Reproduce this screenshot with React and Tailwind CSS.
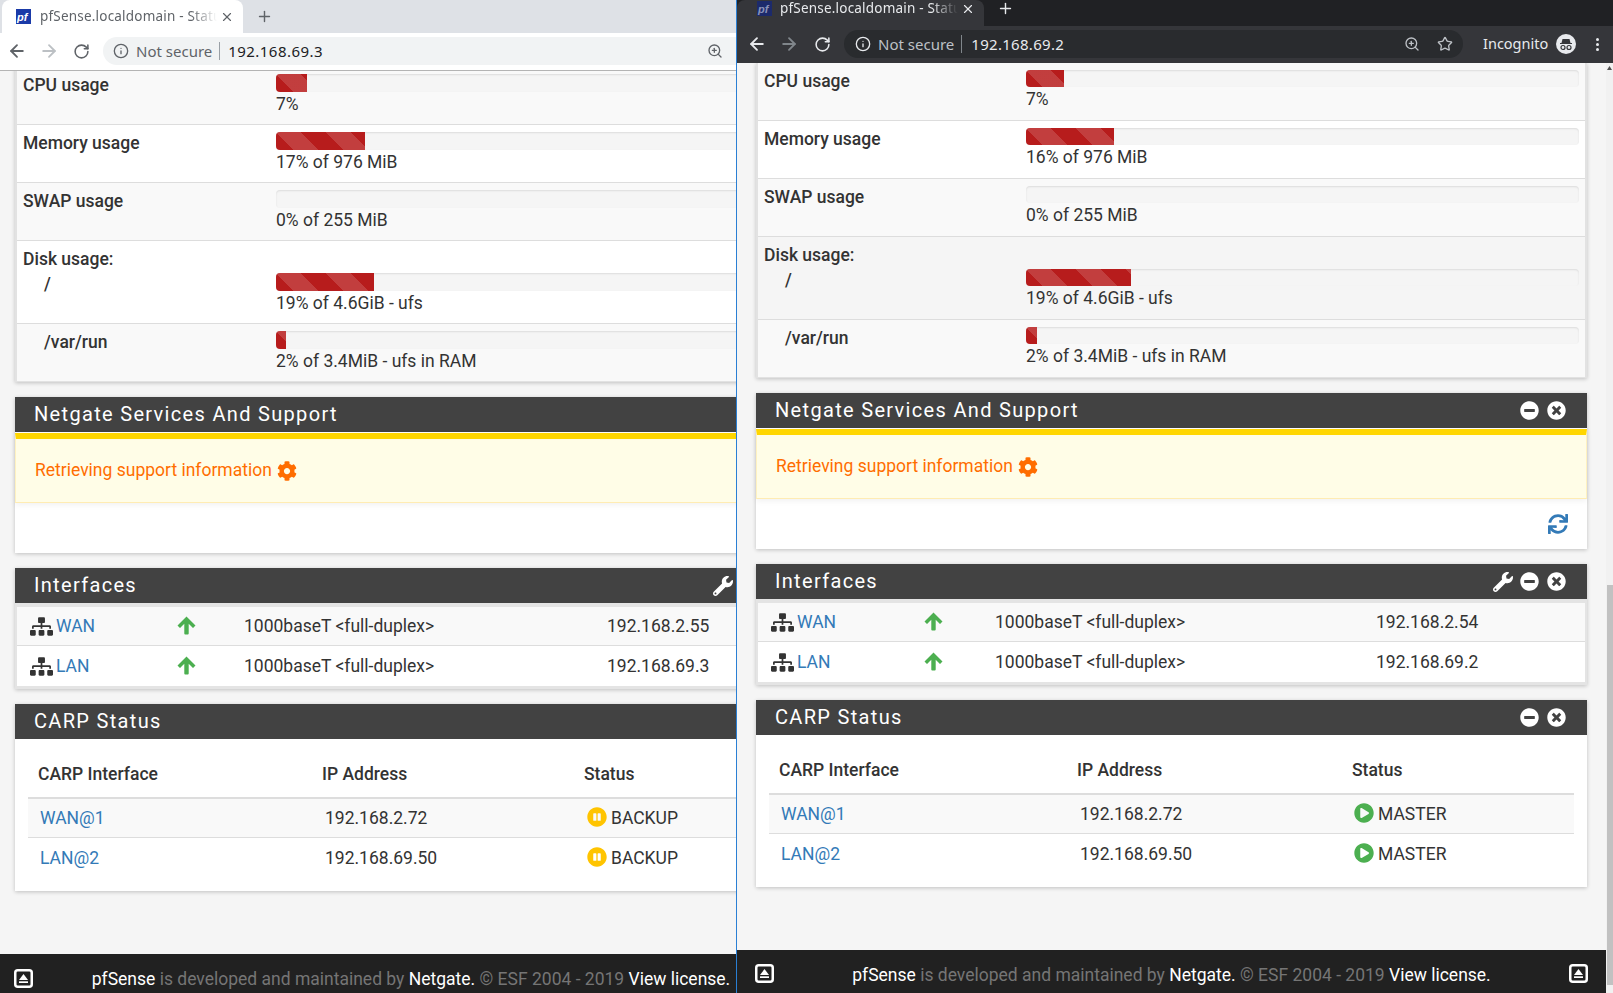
import React from "react";
import { ArrowLeft, ArrowRight, RotateCw, Info, ZoomIn, Star, X, Plus } from "lucide-react";
import { FaCog, FaMinusCircle, FaTimesCircle, FaWrench, FaSitemap, FaPauseCircle, FaPlayCircle, FaSync } from "react-icons/fa";

const stripes =
  "bg-[#b71c1c] bg-[linear-gradient(45deg,rgba(255,255,255,.15)_25%,transparent_25%,transparent_50%,rgba(255,255,255,.15)_50%,rgba(255,255,255,.15)_75%,transparent_75%,transparent)] bg-[length:50px_50px]";

function Favicon({ dark }) {
  return (
    <svg width="15" height="15" viewBox="0 0 15 15" className="shrink-0">
      <rect width="15" height="15" fill={dark ? "#1c2a6b" : "#1a3aa8"} />
      <text x="1" y="12" fontSize="11" fontWeight="700" fontStyle="italic" fontFamily="Liberation Sans, sans-serif" fill={dark ? "#8a93b8" : "#ffffff"}>pf</text>
    </svg>
  );
}

function Incognito() {
  return (
    <svg width="20" height="20" viewBox="0 0 20 20" className="shrink-0">
      <circle cx="10" cy="10" r="10" fill="#e8eaed" />
      <path d="M4 9h12v1H4zM6.5 5h7l1 4h-9z" fill="#35363a" />
      <circle cx="7" cy="13.5" r="2" fill="none" stroke="#35363a" strokeWidth="1.2" />
      <circle cx="13" cy="13.5" r="2" fill="none" stroke="#35363a" strokeWidth="1.2" />
    </svg>
  );
}

function UpBox() {
  return (
    <svg width="19" height="19" viewBox="0 0 19 19" className="mb-[3px] shrink-0">
      <rect x="1.25" y="1.25" width="16.5" height="16.5" rx="2.5" fill="none" stroke="#ffffff" strokeWidth="2.5" />
      <path d="M9.5 5l4.5 6h-9z" fill="#ffffff" />
      <rect x="5" y="12.3" width="9" height="1.7" fill="#ffffff" />
    </svg>
  );
}

function UpArrow() {
  return (
    <svg width="19" height="19" viewBox="0 0 19 19" className="mb-[2px] text-[#4caf50]">
      <path d="M9.5 .5L18.5 9.5 16 12 11.7 7.8V17.6q0 .9-.9 .9H8.2q-.9 0-.9-.9V7.8L3 12 .5 9.5z" fill="currentColor" />
    </svg>
  );
}

function LightChrome() {
  return (
    <div className="shrink-0 font-['Noto_Sans',sans-serif]">
      <div className="flex h-[33px] items-center bg-[#dee1e6]">
        <div className="ml-[2px] flex h-[33px] w-[241px] items-center rounded-t-lg bg-white pl-[14px]">
          <Favicon />
          <span className="ml-[9px] w-[177px] overflow-hidden whitespace-nowrap text-[13.5px] tracking-[0.2px] text-[#5f6368] [mask-image:linear-gradient(90deg,#000_85%,transparent)]">pfSense.localdomain - Status: Dashboard</span>
          <X size={14} className="ml-[3px] text-[#5f6368]" />
        </div>
        <Plus size={17} className="ml-[13px] text-[#5f6368]" />
      </div>
      <div className="flex h-[38px] items-center border-b border-[#b4b4b4] bg-white pb-px pl-[7px]">
        <ArrowLeft size={20} strokeWidth={2.2} className="text-[#5f6368]" />
        <ArrowRight size={20} strokeWidth={2.2} className="ml-[12px] text-[#bcc0c4]" />
        <RotateCw size={17} strokeWidth={2.2} className="ml-[14px] text-[#5f6368]" />
        <div className="ml-[13px] flex h-[28px] flex-1 items-center rounded-l-full bg-[#f1f3f4] pl-[10px] pr-[13px] text-[15px]">
          <Info size={16} className="text-[#5f6368]" />
          <span className="ml-[7px] text-[#5f6368]">Not secure</span>
          <span className="ml-[7px] h-[18px] w-px bg-[#9aa0a6]" />
          <span className="ml-[8px] tracking-[0.45px] text-[#202124]">192.168.69.3</span>
          <ZoomIn size={16} className="ml-auto text-[#5f6368]" />
        </div>
      </div>
    </div>
  );
}

function DarkChrome() {
  return (
    <div className="shrink-0 font-['Noto_Sans',sans-serif]">
      <div className="flex h-[26px] items-center bg-[#202124]">
        <div className="flex h-[26px] w-[247px] items-start overflow-hidden rounded-t-lg bg-[#35363a] pl-[20px] pt-px">
          <Favicon dark />
          <span className="ml-[8px] w-[178px] overflow-hidden whitespace-nowrap text-[13.5px] leading-[15px] tracking-[0.2px] text-[#e8eaed] [mask-image:linear-gradient(90deg,#000_85%,transparent)]">pfSense.localdomain - Status: Dashboard</span>
          <X size={14} className="ml-[3px] mt-px text-[#e8eaed]" />
        </div>
        <Plus size={17} className="mb-[10px] ml-[13px] text-[#e8eaed]" />
      </div>
      <div className="flex h-[37px] items-center bg-[#35363a] pb-px pl-[10px] pr-[9px]">
        <ArrowLeft size={20} strokeWidth={2.2} className="text-[#e8eaed]" />
        <ArrowRight size={20} strokeWidth={2.2} className="ml-[12px] text-[#80868b]" />
        <RotateCw size={17} strokeWidth={2.2} className="ml-[15px] text-[#e8eaed]" />
        <div className="ml-[13px] flex h-[28px] w-[619px] items-center rounded-full bg-[#292b2e] pl-[11px] pr-[10px] text-[15px]">
          <Info size={16} className="text-[#e8eaed]" />
          <span className="ml-[7px] text-[#bdc1c6]">Not secure</span>
          <span className="ml-[7px] h-[18px] w-px bg-[#80868b]" />
          <span className="ml-[9px] tracking-[0.3px] text-[#e8eaed]">192.168.69.2</span>
          <ZoomIn size={16} className="ml-auto text-[#bdc1c6]" />
          <Star size={16} className="ml-[17px] text-[#bdc1c6]" />
        </div>
        <span className="ml-[20px] text-[14.5px] text-[#e8eaed]">Incognito</span>
        <span className="ml-[8px]"><Incognito /></span>
        <span className="ml-[20px] flex flex-col gap-[2px]">
          <i className="size-[3px] rounded-full bg-[#e8eaed]" />
          <i className="size-[3px] rounded-full bg-[#e8eaed]" />
          <i className="size-[3px] rounded-full bg-[#e8eaed]" />
        </span>
      </div>
    </div>
  );
}

function Panel({ title, wrench, children }) {
  return (
    <section className="bg-white shadow-[0_1px_4px_rgba(0,0,0,.22)]">
      <div className="flex h-[35px] items-center justify-between bg-[#424242] pl-[19px] pr-[21px] text-[20px] tracking-[1.32px] text-white">
        <h2 className="font-normal leading-[35px]">{title}</h2>
        <div className="flex items-center gap-[8px]">
          {wrench && <FaWrench size={20} className="-mr-px" />}
          <FaMinusCircle size={19} />
          <FaTimesCircle size={19} />
        </div>
      </div>
      {children}
    </section>
  );
}

function Bar({ w, h }) {
  return (
    <div className={`${h} overflow-hidden rounded-[4px] bg-[#f5f5f5] shadow-[inset_0_1px_2px_rgba(0,0,0,.1)]`}>
      {w > 0 && <div className={`h-full ${stripes}`} style={{ width: w }} />}
    </div>
  );
}

function MetricRow({ label, indent, head, value, w, bg, d, last }) {
  return (
    <div className={`flex px-[6px] py-[7px] leading-[25px] ${last ? "" : "border-b border-[#dddddd]"} ${bg}`}>
      <div className={`-mt-px shrink-0 font-medium ${d.metricCol}`}>
        {head && <div>{head}</div>}
        <div className={indent ? "pl-[21px]" : ""}>{label}</div>
      </div>
      <div className={`min-w-0 flex-1 ${head ? "pt-[25px]" : ""}`}>
        <Bar w={w} h={d.barH} />
        <div className={d.valuePad}>{value}</div>
      </div>
    </div>
  );
}

function Page({ d }) {
  return (
    <div className={`${d.pageW} shrink-0 font-['Roboto',sans-serif] text-[17.5px] text-[#333333]`}>
      <div className={`${d.mx} flex flex-col gap-[15px]`}>
        <section className={`border-x-2 border-b border-[#e2e2e2] bg-white shadow-[0_1px_4px_rgba(0,0,0,.22)] ${d.firstTop}`}>
          <MetricRow label="CPU usage" value="7%" w={d.bars[0]} bg="bg-[#f9f9f9]" d={d} />
          <MetricRow label="Memory usage" value={d.mem} w={d.bars[1]} bg="bg-white" d={d} />
          <MetricRow label="SWAP usage" value="0% of 255 MiB" w={0} bg="bg-[#f9f9f9]" d={d} />
          <MetricRow head="Disk usage:" label="/" indent value="19% of 4.6GiB - ufs" w={d.bars[2]} d={d} bg={d.diskBg} />
          <MetricRow label="/var/run" indent value="2% of 3.4MiB - ufs in RAM" w={d.bars[3]} d={d} bg="bg-[#f9f9f9]" last />
        </section>

        <Panel title="Netgate Services And Support">
          <div className="mt-px h-[70px] border-x border-b border-x-[#fff2c0] border-b-[#ffecb3] border-t-[6px] border-t-[#ffd600] bg-[#fffde7] pl-[19px] shadow-[0_2px_6px_rgba(0,0,0,.06)]">
            <div className="flex h-[63px] items-center gap-[5px] text-[#ff6d00]">
              Retrieving support information <FaCog size={20} />
            </div>
          </div>
          <div className="flex h-[50px] items-center justify-end pr-[19px] text-[#337ab7]">
            <FaSync size={20} />
          </div>
        </Panel>

        <Panel title="Interfaces" wrench>
          <div className="border-x-[2.5px] border-b-[3px] border-t-4 border-[#e4e4e4]">
            {d.ifaces.map(([n, ip], i) => (
              <div key={n} className={`grid items-center pl-[13px] ${d.ifCols} ${i === 0 ? "h-[39px] border-b border-[#dddddd] bg-[#f9f9f9]" : "h-[40px] bg-white"}`}>
                <div className="flex items-center gap-[3px]">
                  <FaSitemap size={23} className="text-[#333333]" />
                  <a className="text-[#337ab7]">{n}</a>
                </div>
                <UpArrow />
                <div>1000baseT &lt;full-duplex&gt;</div>
                <div>{ip}</div>
              </div>
            ))}
          </div>
        </Panel>

        <Panel title="CARP Status">
          <div className="px-[13px] pb-[13px]">
            <div className={`grid h-[60px] items-center border-b-2 border-[#dddddd] pl-[10px] pt-[13px] font-medium ${d.carpHead}`}>
              <div>CARP Interface</div>
              <div>IP Address</div>
              <div>Status</div>
            </div>
            {d.carp.map(([n, ip], i) => (
              <div key={n} className={`grid items-center pl-[12px] ${d.carpRow} ${i === 0 ? "h-[39px] border-b border-[#dddddd] bg-[#f9f9f9]" : "h-[40px] bg-white"}`}>
                <a className="text-[#337ab7]">{n}</a>
                <div>{ip}</div>
                <div className="flex items-center gap-[4px]">
                  {d.dark ? <FaPlayCircle size={20} className="mb-[3px] text-[#4caf50]" /> : <FaPauseCircle size={20} className="mb-[3px] text-[#ffc400]" />}
                  {d.dark ? "MASTER" : "BACKUP"}
                </div>
              </div>
            ))}
          </div>
        </Panel>
      </div>
    </div>
  );
}

function Footer({ d }) {
  return (
    <div className={`${d.pageW} ${d.footer} flex shrink-0 items-center justify-between bg-[#212121] font-['Roboto',sans-serif] text-[17.5px] text-[#757575]`}>
      <UpBox />
      <p>
        <span className="text-white">pfSense</span> is developed and maintained by <span className="text-white">Netgate.</span> © ESF 2004 - 2019 <span className="text-white">View license.</span>
      </p>
      <UpBox />
    </div>
  );
}

const left = {
  dark: false,
  pageW: "w-[822px]",
  mx: "mx-[15px]",
  firstTop: "-mt-[4px]",
  metricCol: "w-[253px]",
  barH: "h-[18px]",
  valuePad: "",
  diskBg: "bg-white",
  footer: "h-[39px] pt-[12px] px-[14px]",
  mem: "17% of 976 MiB",
  bars: [31, 89, 98, 10],
  ifCols: "grid-cols-[147px_67px_363px_1fr]",
  carpHead: "grid-cols-[284px_262px_1fr]",
  carpRow: "grid-cols-[285px_262px_1fr]",
  ifaces: [["WAN", "192.168.2.55"], ["LAN", "192.168.69.3"]],
  carp: [["WAN@1", "192.168.2.72"], ["LAN@2", "192.168.69.50"]],
};

const right = {
  dark: true,
  pageW: "w-[869px]",
  mx: "mx-[19px]",
  firstTop: "",
  metricCol: "w-[262px]",
  barH: "h-[17px]",
  valuePad: "pb-px",
  diskBg: "bg-[#f5f5f5]",
  footer: "h-[43px] pt-[7px] px-[18px]",
  mem: "16% of 976 MiB",
  bars: [38, 88, 105, 11],
  ifCols: "grid-cols-[153px_71px_381px_1fr]",
  carpHead: "grid-cols-[298px_275px_1fr]",
  carpRow: "grid-cols-[299px_274px_1fr]",
  ifaces: [["WAN", "192.168.2.54"], ["LAN", "192.168.69.2"]],
  carp: [["WAN@1", "192.168.2.72"], ["LAN@2", "192.168.69.50"]],
};

export default function App() {
  return (
    <div className="flex h-[993px] w-[1613px] overflow-hidden bg-[#f5f5f5]">
      <div className="flex w-[735.5px] shrink-0 flex-col overflow-hidden">
        <LightChrome />
        <div className="min-h-0 flex-1 overflow-hidden">
          <Page d={left} />
        </div>
        <Footer d={left} />
      </div>
      <div className="w-[1.5px] shrink-0 bg-[#2a7fd4]" />
      <div className="flex min-w-0 flex-1 flex-col overflow-hidden">
        <DarkChrome />
        <div className="flex min-h-0 flex-1">
          <div className="flex w-[869px] shrink-0 flex-col">
            <div className="min-h-0 flex-1 overflow-hidden">
              <Page d={right} />
            </div>
            <Footer d={right} />
          </div>
          <div className="flex flex-1 flex-col items-end bg-[#f1f1f1]">
            <svg width="7" height="12" viewBox="0 0 7 12" className="text-[#505050]">
              <path d="M3.5 3L6 7H1z" fill="currentColor" />
            </svg>
            <div className="flex-1" />
            <div className="h-[400px] w-[6px] bg-[#c1c1c1]" />
            <div className="h-[8px]" />
          </div>
        </div>
      </div>
    </div>
  );
}
